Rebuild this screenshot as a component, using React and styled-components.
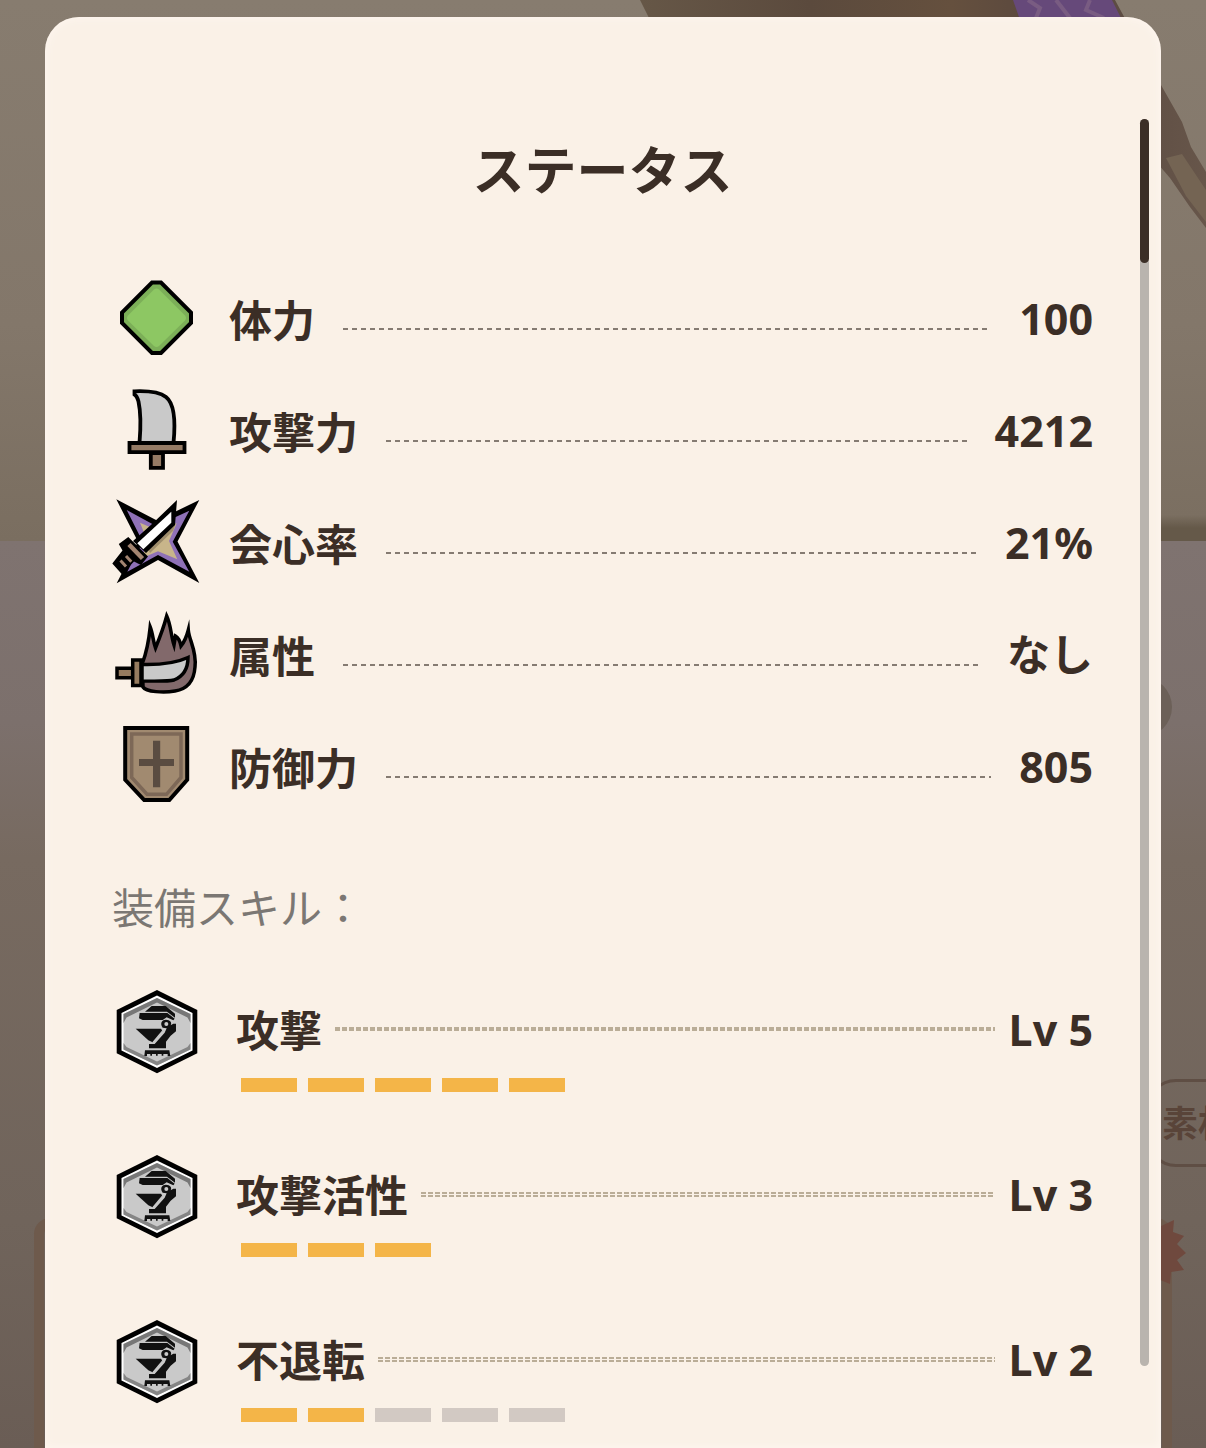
import React from "react";
import styled, { createGlobalStyle } from "styled-components";

const GlobalStyle = createGlobalStyle`
  * {
    box-sizing: border-box;
  }

  body {
    margin: 0;
    color: #3b2e26;
    font-family: "Noto Sans", "Noto Sans CJK JP", sans-serif;
  }
`;

// ---------- page behind the dialog ----------

const Page = styled.div`
  position: relative;
  display: flex;
  flex-direction: column;
  height: 100vh;
  overflow: hidden;
`;

const Scene = styled.div`
  display: flex;
  justify-content: flex-end;
  flex: none;
  height: 541px;
  background: linear-gradient(#877c6f, #83776a 60%, #7a6e60);
`;

const Lower = styled.div`
  display: flex;
  flex: 1;
  flex-direction: column;
  align-items: flex-end;
  background: linear-gradient(#7f7370, #7c706c 20%, #776a60 35%, #70645b 75%, #6a5d55);
`;

const RoundButton = styled.button`
  flex: none;
  width: 60px;
  height: 60px;
  margin: 136px 34px 0 0;
  border: none;
  border-radius: 50%;
  background: #6c6058;
`;

const Chip = styled.button`
  flex: none;
  width: 160px;
  height: 88px;
  margin: 342px -100px 0 0;
  padding: 0 0 4px 13px;
  border: 3px solid #5f4e44;
  border-radius: 30px;
  background: transparent;
  color: #594439;
  font-family: inherit;
  font-size: 36px;
  font-weight: 700;
  text-align: left;
`;

const BackCard = styled.div`
  position: relative;
  flex: 1;
  align-self: stretch;
  margin: 51px 34px 0;
  border: 10px solid #6e5a4c;
  border-bottom: none;
  border-radius: 16px 16px 0 0;
`;

const Burst = styled.svg`
  position: absolute;
  top: -10px;
  right: -24px;
`;

// ---------- dialog ----------

const Overlay = styled.div`
  position: absolute;
  inset: 0;
  display: flex;
  padding: 17px 45px 0;
`;

const Panel = styled.section`
  display: flex;
  flex: 1;
  min-width: 0;
  padding-right: 12px;
  border-radius: 34px 34px 0 0;
  background: #faf1e7;
  box-shadow: inset 0 0 10px #fff7f1;
`;

const Content = styled.div`
  flex: 1;
  min-width: 0;
  padding: 113px 47px 24px 67px;
  overflow-y: auto;
  scrollbar-width: none;
`;

const Track = styled.div`
  flex: none;
  width: 9px;
  margin: 102px 0 82px;
  border-radius: 5px;
  background: #b9b4ae;
`;

const Thumb = styled.div`
  height: 144px;
  border-radius: 5px;
  background: #3b2e26;
`;

const Title = styled.h1`
  margin: 0 0 65px;
  font-size: 52px;
  font-weight: 700;
  line-height: 80px;
  text-align: center;
`;

const StatList = styled.dl`
  display: flex;
  flex-direction: column;
  gap: 24px;
  margin: 0;
`;

const StatRow = styled.div`
  display: flex;
  align-items: center;
  height: 88px;
`;

const Icon = styled.svg`
  flex: none;
  width: 88px;
  height: 88px;
  overflow: visible;
`;

const StatName = styled.dt`
  margin-left: 29px;
  padding-top: 4px;
  font-size: 43px;
  font-weight: 700;
  line-height: 64px;
`;

const StatValue = styled.dd`
  margin: 0;
  font-size: 43px;
  font-weight: 700;
  line-height: 64px;
`;

const Dashes = styled.span`
  flex: 1;
  height: 2px;
  margin: 19px 28px 0 28px;
  background: repeating-linear-gradient(90deg, #857b72 0 5px, transparent 5px 9px);
`;

const SubTitle = styled.h2`
  margin: 67px 0 50px;
  color: #7b7773;
  font-size: 42px;
  font-weight: 400;
  line-height: 60px;
`;

const SkillList = styled.ul`
  display: flex;
  flex-direction: column;
  gap: 61px;
  margin: 0;
  padding: 0;
  list-style: none;
`;

const SkillItem = styled.li`
  display: flex;
  gap: 36px;
`;

const SkillBody = styled.div`
  flex: 1;
  min-width: 0;
`;

const SkillHead = styled.div`
  display: flex;
  align-items: center;
  height: 84px;
  font-size: 43px;
  font-weight: 700;
  line-height: 64px;
`;

const SkillName = styled.span`
  padding-top: 2px;
`;

const Dots = styled.span`
  display: flex;
  flex: 1;
  flex-direction: column;
  gap: ${(p) => (p.$solid ? 0 : 1)}px;
  margin: 0 14px 2px 13px;

  &::before,
  &::after {
    content: "";
    height: 2px;
    background: repeating-linear-gradient(90deg, #baad97 0 5px, transparent 5px 7px);
  }
`;

const Levels = styled.div`
  display: flex;
  gap: 11px;
  margin: 6px 0 0 5px;
`;

const Level = styled.span`
  width: 56px;
  height: 14px;
  background: ${(p) => (p.$on ? "#f4b548" : "#d2c9c3")};
`;

// ---------- icons ----------

const HealthIcon = () => (
  <Icon viewBox="0 0 88 88" aria-hidden="true">
    <path d="M40 7.5H49L79 37.5V48L49 78H40L10 48V37.5Z" fill="#7caf58" stroke="#000" strokeWidth="4" />
    <path d="M42 14.5Q44.5 12.5 47 14.5L73 40.5Q75 43 73 45.5L47 71Q44.5 73 42 71L16 45.5Q14 43 16 40.5Z" fill="#8dc763" />
  </Icon>
);

const AttackIcon = () => (
  <Icon viewBox="0 0 88 88" fill="#c9c9c9" stroke="#000" strokeWidth="3.8" aria-hidden="true">
    <path d="M27.5 56C28.5 44 29 26 26.5 14.5Q25 9 22.5 7.5V4.3C35 3.8 47 4.5 54 10C63 17 63.5 36 61.5 56Z" />
    <path d="M17.5 56H72.5V65.2H17.5Z" fill="#957b65" />
    <path d="M38.8 66H51V80.8H38.8Z" fill="#957b65" />
  </Icon>
);

const CritIcon = () => (
  <Icon viewBox="0 0 88 88" aria-hidden="true">
    <path d="M4.3.3L45 21.5L87.3 1L65.5 42.5L87.3 84L46 61L4.7 84.3L26 42.7Z" fill="#000" />
    <path d="M14.7 11L44 27L77.3 11.7L60.7 42.7L77.3 72.7L46 56L15.3 72.7L30.7 42.7Z" fill="#8f71b7" />
    <path d="M28 23.7L44.7 31L64.7 24.3L57 42L65.3 60.3L46 52.3L29.7 59.3L35.7 42.7Z" fill="#c8b58a" />
    <path d="M38 54L61 32L64 24L36 50Z" fill="#74664d" opacity=".5" />
    <path d="M65 1L63 26L34 54L21 42L40 25Z" fill="#000" />
    <path d="M59.3 12.7V23.7L31.3 50.3L25.3 44.3Z" fill="#fff" />
    <path d="M16.3 38L36 57.5L29 66L22 62.5L9.7 75L.3 64.5L10.5 51.5L6.8 45Z" fill="#000" />
    <path d="M17 45.5L30.5 59.5" stroke="#a38571" strokeWidth="4.5" />
    <path d="M8.5 61.5L14 67.5M14 57L19.3 62.7" stroke="#a38571" strokeWidth="3" />
  </Icon>
);

const ElementIcon = () => (
  <Icon viewBox="0 0 88 88" stroke="#000" strokeWidth="3.5" strokeMiterlimit="8" aria-hidden="true">
    <path
      d="M30.5 52C35 40 37 28 38.2 16C41 23 41 30 43.5 37C48 26 52 15 54.7 5C59 14 59 25 62 34L63.5 25C67 27 68 30 69 35C73 30 75 24 76.3 19C77 29 85 40 83 56C82 70 76 78 63 80C52 82 34 81 31 76Z"
      fill="#82696b"
    />
    <path d="M30 53.5C48 54 64 52 76 46.5C76 58 72 65 62 69Q57 70.5 30 70Z" fill="#c9c9c9" />
    <path d="M5 57.3H21V66.7H5Z" fill="#957b5f" />
    <path d="M20.7 49H29V74.5H20.7Z" fill="#957b5f" />
  </Icon>
);

const DefenseIcon = () => (
  <Icon viewBox="0 0 88 88" aria-hidden="true">
    <path d="M13.2 4.9H75.2V56.8L57.3 77.1H32.2L13.2 56.8Z" fill="#a18a70" stroke="#000" strokeWidth="4" />
    <path d="M19.7 11H69V54.5L54.5 71.3H35L19.7 54.5Z" fill="none" stroke="#7d6857" strokeWidth="3.5" />
    <path d="M44.6 17.7V64.3M27 39.5H62" stroke="#5a4c41" strokeWidth="7.2" />
  </Icon>
);

const SkillIcon = () => (
  <Icon viewBox="0 0 88 88" aria-hidden="true">
    <path d="M45 2L85.3 22V65.3L45 85.3L4.7 65.3V22Z" fill="#000" />
    <path d="M45 7.5L80.5 25V62.5L45 80L9.5 62.5V25Z" fill="#fff" />
    <path d="M45 10L78.5 26V61.5L45 77.5L11.5 61.5V26Z" fill="#c9c9c9" />
    <path d="M11.5 35V26L45 10L78.5 26V35L75.5 29.5L45 14.5L14.5 29.5Z" fill="#777" />
    <path d="M11.5 55V61.5L45 77.5L78.5 61.5V55L75.5 59L45 73.5L14.5 59Z" fill="#858585" />
    <g transform="translate(-2 -3) scale(.3333)" fill="#111">
      <path d="M125 63H167L195 86V98L171 80H105Z" />
      <path d="M89 84H172L194 101L190 106L170 97L158 105H98L87 100Z" />
      <path d="M77 131H153L158 139L128 172L115 166Z" />
      <path d="M158 128C146 110 162 100 176 106C184 109 185 116 182 121L190 116H198V139L182 152L168 170V190H117V177H134L164 143L170 130Z" />
      <circle cx="169" cy="117" r="6" fill="#c9c9c9" />
      <path d="M161 134L129 172" stroke="#c9c9c9" strokeWidth="4" />
      <path d="M105 196H178L181 213H173V207H160V212H155V207H143V212H138V207H126V212H121V207H111V213H103Z" />
    </g>
  </Icon>
);

const Monster = () => (
  <svg width="566" height="541" viewBox="640 0 566 541" aria-hidden="true">
    <defs>
      <linearGradient id="body">
        <stop offset="0" stopColor="#665747" />
        <stop offset=".3" stopColor="#5b4a3d" />
        <stop offset=".55" stopColor="#65503e" />
        <stop offset=".75" stopColor="#57463e" />
        <stop offset="1" stopColor="#67564a" />
      </linearGradient>
      <linearGradient id="ledge" x2="0" y2="1">
        <stop offset="0" stopColor="#655949" stopOpacity="0" />
        <stop offset=".5" stopColor="#655949" />
      </linearGradient>
    </defs>
    <path d="M640 0H1115L1161 85L1182 122L1191 147L1206 172V228L1190 207L1170 178L1120 120L650 20Z" fill="url(#body)" />
    <path d="M1013 0H1112L1122 20H1020Z" fill="#66497a" />
    <path d="M1028 0L1040 8L1036 18M1056 0L1070 18M1090 0L1086 10L1104 18" fill="none" stroke="#795c82" strokeWidth="4" />
    <path d="M1166 158L1182 154L1206 190V222L1186 196Z" fill="#746453" />
    <rect x="1140" y="515" width="66" height="26" fill="url(#ledge)" />
  </svg>
);

const stats = [
  { name: "体力", value: "100", icon: HealthIcon },
  { name: "攻撃力", value: "4212", icon: AttackIcon },
  { name: "会心率", value: "21%", icon: CritIcon },
  { name: "属性", value: "なし", icon: ElementIcon },
  { name: "防御力", value: "805", icon: DefenseIcon },
];

const skills = [
  { name: "攻撃", level: 5, max: 5 },
  { name: "攻撃活性", level: 3, max: 3 },
  { name: "不退転", level: 2, max: 5 },
];

const App = () => {
  return (
    <Page>
      <GlobalStyle />
      <Scene>
        <Monster />
      </Scene>
      <Lower>
        <RoundButton type="button" />
        <Chip type="button">素材</Chip>
        <BackCard>
          <Burst width="70" height="70" viewBox="0 0 70 70" aria-hidden="true">
            <path
              d="M35 0L41 10L58 2L57 14L68 18L61 26L70 35L61 42L68 52L55 54L54 66L42 61L35 70L28 61L16 66L15 54L2 52L8 42L0 35L8 26L2 18L15 14L16 4L28 10Z"
              fill="#6f493e"
            />
          </Burst>
        </BackCard>
      </Lower>

      <Overlay>
        <Panel role="dialog" aria-labelledby="status-title">
          <Content>
            <Title id="status-title">ステータス</Title>
            <StatList>
              {stats.map(({ name, value, icon: StatIcon }) => (
                <StatRow key={name}>
                  <StatIcon />
                  <StatName>{name}</StatName>
                  <Dashes />
                  <StatValue>{value}</StatValue>
                </StatRow>
              ))}
            </StatList>

            <SubTitle>装備スキル：</SubTitle>
            <SkillList>
              {skills.map((skill, index) => (
                <SkillItem key={skill.name}>
                  <SkillIcon />
                  <SkillBody>
                    <SkillHead>
                      <SkillName>{skill.name}</SkillName>
                      <Dots $solid={index === 0} />
                      <span>Lv {skill.level}</span>
                    </SkillHead>
                    <Levels>
                      {Array.from({ length: skill.max }, (_, i) => (
                        <Level key={i} $on={i < skill.level} />
                      ))}
                    </Levels>
                  </SkillBody>
                </SkillItem>
              ))}
            </SkillList>
          </Content>
          <Track>
            <Thumb />
          </Track>
        </Panel>
      </Overlay>
    </Page>
  );
};

export default App;
